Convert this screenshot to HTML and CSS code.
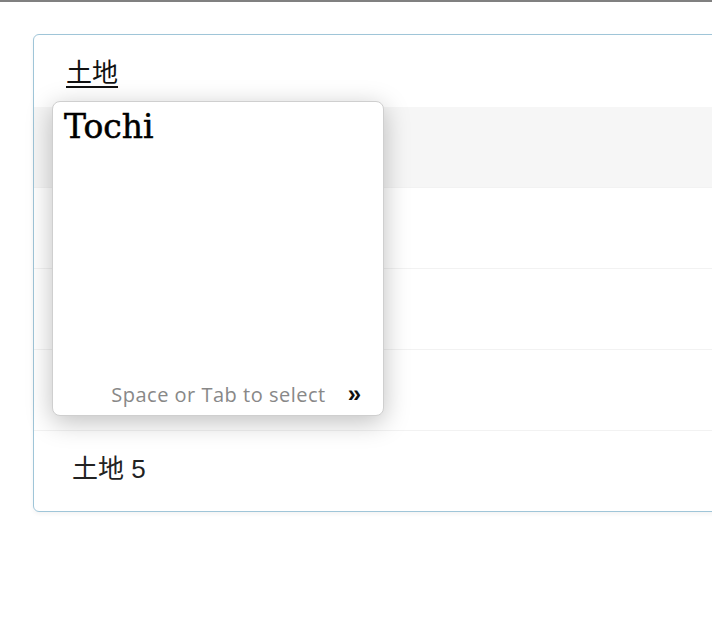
FILE: index.html
```html
<!DOCTYPE html>
<html lang="ja">
<head>
<meta charset="utf-8">
<link rel="stylesheet" href="styles.css">
</head>
<body>
<div class="topbar"></div>
<div class="page">
  <div class="card">
    <div class="input-row"><span class="composing">土地</span></div>
    <div class="row row-active"><span class="label">土地 1</span></div>
    <div class="row"><span class="label">土地 2</span></div>
    <div class="row"><span class="label">土地 3</span></div>
    <div class="row"><span class="label">土地 4</span></div>
    <div class="row"><span class="label">土地 5</span></div>
    <div class="popup">
      <div class="popup-title">Tochi</div>
      <div class="popup-footer">
        <span class="hint">Space or Tab to select</span>
        <span class="chev">»</span>
      </div>
    </div>
  </div>
</div>
</body>
</html>
```
FILE: styles.css
```css
html, body {
  margin: 0;
  padding: 0;
  background: #ffffff;
  overflow: hidden;
}
body {
  width: 712px;
  height: 624px;
  font-family: "Liberation Sans", "Noto Sans CJK JP", sans-serif;
  color: #222;
}
.topbar {
  height: 2px;
  background: #808080;
}
.page {
  padding: 32px 0 0 33px;
}
.card {
  position: relative;
  width: 720px;
  border: 1px solid #9fc5d8;
  border-radius: 6px;
  box-shadow: 0 2px 4px rgba(0, 0, 0, 0.05);
}
.input-row {
  height: 72px;
  display: flex;
  align-items: center;
  padding-left: 32px;
}
.composing {
  font-family: "Noto Sans CJK JP", sans-serif;
  font-size: 26px;
  line-height: 1;
  color: #111;
  text-decoration: underline;
  text-decoration-thickness: 2px;
  text-underline-offset: 4px;
}
.row {
  height: 76px;
  border-top: 1px solid #f2f2f2;
  display: flex;
  align-items: center;
  padding: 0 0 4px 38px;
}
.row:last-of-type {
  border-radius: 0 0 6px 6px;
}
.row-active {
  border-top: none;
  background: #f6f6f6;
}
.label {
  font-family: "Liberation Sans", "Noto Sans CJK JP", sans-serif;
  font-size: 26px;
  line-height: 1;
  color: #222;
}
.popup {
  position: absolute;
  left: 18px;
  top: 66px;
  width: 332px;
  height: 315px;
  box-sizing: border-box;
  background: #fff;
  border: 1px solid #cfcfcf;
  border-radius: 8px;
  box-shadow: 0 6px 26px rgba(0, 0, 0, 0.25);
  display: flex;
  flex-direction: column;
  justify-content: space-between;
  padding: 5px 22px 7px 11px;
}
.popup-title {
  font-family: "DejaVu Serif", serif;
  font-size: 33px;
  color: #000;
  -webkit-text-stroke: 0.5px #000;
}
.popup-footer {
  display: flex;
  justify-content: flex-end;
  align-items: center;
  gap: 22px;
}
.hint {
  font-family: "Open Sans", sans-serif;
  font-size: 20px;
  letter-spacing: 0.5px;
  color: #888;
}
.chev {
  font-size: 24px;
  font-weight: bold;
  color: #111;
}
```
